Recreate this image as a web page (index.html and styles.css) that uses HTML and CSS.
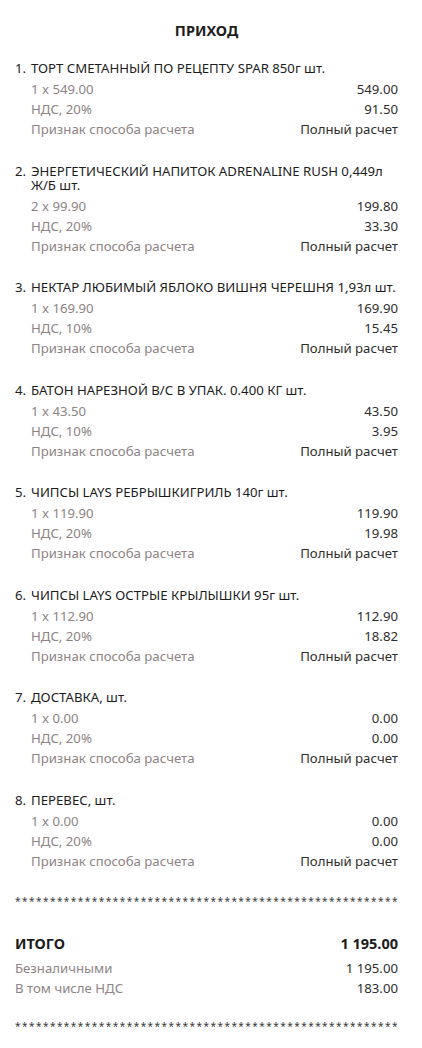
FILE: index.html
```html
<!DOCTYPE html>
<html lang="ru">
<head>
<meta charset="utf-8">
<link rel="stylesheet" href="styles.css">
</head>
<body>
<div class="receipt">
  <h1 class="title">ПРИХОД</h1>
  <ol class="items">
    <li class="item">
      <span class="num">1.</span>
      <div class="body">
        <div class="name">ТОРТ СМЕТАННЫЙ ПО РЕЦЕПТУ SPAR 850г шт.</div>
        <div class="row"><span class="label">1 x 549.00</span><span class="value">549.00</span></div>
        <div class="row"><span class="label">НДС, 20%</span><span class="value">91.50</span></div>
        <div class="row"><span class="label">Признак способа расчета</span><span class="value">Полный расчет</span></div>
      </div>
    </li>
    <li class="item">
      <span class="num">2.</span>
      <div class="body">
        <div class="name">ЭНЕРГЕТИЧЕСКИЙ НАПИТОК ADRENALINE RUSH 0,449л Ж/Б шт.</div>
        <div class="row"><span class="label">2 x 99.90</span><span class="value">199.80</span></div>
        <div class="row"><span class="label">НДС, 20%</span><span class="value">33.30</span></div>
        <div class="row"><span class="label">Признак способа расчета</span><span class="value">Полный расчет</span></div>
      </div>
    </li>
    <li class="item">
      <span class="num">3.</span>
      <div class="body">
        <div class="name">НЕКТАР ЛЮБИМЫЙ ЯБЛОКО ВИШНЯ ЧЕРЕШНЯ 1,93л шт.</div>
        <div class="row"><span class="label">1 x 169.90</span><span class="value">169.90</span></div>
        <div class="row"><span class="label">НДС, 10%</span><span class="value">15.45</span></div>
        <div class="row"><span class="label">Признак способа расчета</span><span class="value">Полный расчет</span></div>
      </div>
    </li>
    <li class="item">
      <span class="num">4.</span>
      <div class="body">
        <div class="name">БАТОН НАРЕЗНОЙ В/С В УПАК. 0.400 КГ шт.</div>
        <div class="row"><span class="label">1 x 43.50</span><span class="value">43.50</span></div>
        <div class="row"><span class="label">НДС, 10%</span><span class="value">3.95</span></div>
        <div class="row"><span class="label">Признак способа расчета</span><span class="value">Полный расчет</span></div>
      </div>
    </li>
    <li class="item">
      <span class="num">5.</span>
      <div class="body">
        <div class="name">ЧИПСЫ LAYS РЕБРЫШКИГРИЛЬ 140г шт.</div>
        <div class="row"><span class="label">1 x 119.90</span><span class="value">119.90</span></div>
        <div class="row"><span class="label">НДС, 20%</span><span class="value">19.98</span></div>
        <div class="row"><span class="label">Признак способа расчета</span><span class="value">Полный расчет</span></div>
      </div>
    </li>
    <li class="item">
      <span class="num">6.</span>
      <div class="body">
        <div class="name">ЧИПСЫ LAYS ОСТРЫЕ КРЫЛЫШКИ 95г шт.</div>
        <div class="row"><span class="label">1 x 112.90</span><span class="value">112.90</span></div>
        <div class="row"><span class="label">НДС, 20%</span><span class="value">18.82</span></div>
        <div class="row"><span class="label">Признак способа расчета</span><span class="value">Полный расчет</span></div>
      </div>
    </li>
    <li class="item">
      <span class="num">7.</span>
      <div class="body">
        <div class="name">ДОСТАВКА, шт.</div>
        <div class="row"><span class="label">1 x 0.00</span><span class="value">0.00</span></div>
        <div class="row"><span class="label">НДС, 20%</span><span class="value">0.00</span></div>
        <div class="row"><span class="label">Признак способа расчета</span><span class="value">Полный расчет</span></div>
      </div>
    </li>
    <li class="item">
      <span class="num">8.</span>
      <div class="body">
        <div class="name">ПЕРЕВЕС, шт.</div>
        <div class="row"><span class="label">1 x 0.00</span><span class="value">0.00</span></div>
        <div class="row"><span class="label">НДС, 20%</span><span class="value">0.00</span></div>
        <div class="row"><span class="label">Признак способа расчета</span><span class="value">Полный расчет</span></div>
      </div>
    </li>
  </ol>
  <div class="stars">*******************************************************</div>
  <div class="total"><span>ИТОГО</span><span>1 195.00</span></div>
  <div class="row"><span class="label">Безналичными</span><span class="value">1 195.00</span></div>
  <div class="row"><span class="label">В том числе НДС</span><span class="value">183.00</span></div>
  <div class="stars stars-end">*******************************************************</div>
</div>
</body>
</html>
```
FILE: styles.css
```css
* { box-sizing: border-box; }
html, body { margin: 0; padding: 0; background: #fff; }
body {
  font-family: "Noto Sans", "Open Sans", sans-serif;
  font-size: 13.2px;
  color: #2a2a2a;
}
.receipt {
  width: 422px;
  padding: 0 24px 0 15px;
}
.title {
  margin: 0;
  padding-top: 20px;
  height: 61px;
  line-height: 20px;
  font-size: 14.5px;
  font-weight: 700;
  text-align: center;
  color: #1c1c1c;
}
.items {
  list-style: none;
  margin: 0;
  padding: 0;
}
.item {
  display: flex;
  margin-bottom: 24.5px;
}
.num {
  width: 16px;
  flex: none;
  line-height: 14px;
  color: #1c1c1c;
}
.body { flex: 1; }
.name {
  line-height: 14px;
  margin-bottom: 4px;
  color: #1c1c1c;
}
.row {
  display: flex;
  justify-content: space-between;
  line-height: 20px;
  height: 20px;
}
.label { color: #8d8484; }
.value { color: #2e2e2e; }
.stars {
  white-space: nowrap;
  font-size: 10px;
  line-height: 12px;
  letter-spacing: 1.47px;
  color: #3a3a3a;
  margin-top: 0;
}
.total {
  display: flex;
  justify-content: space-between;
  margin-top: 27px;
  margin-bottom: 6px;
  line-height: 18px;
  font-size: 14.5px;
  font-weight: 700;
  color: #1c1c1c;
}
.stars-end { margin-top: 22px; }
```
